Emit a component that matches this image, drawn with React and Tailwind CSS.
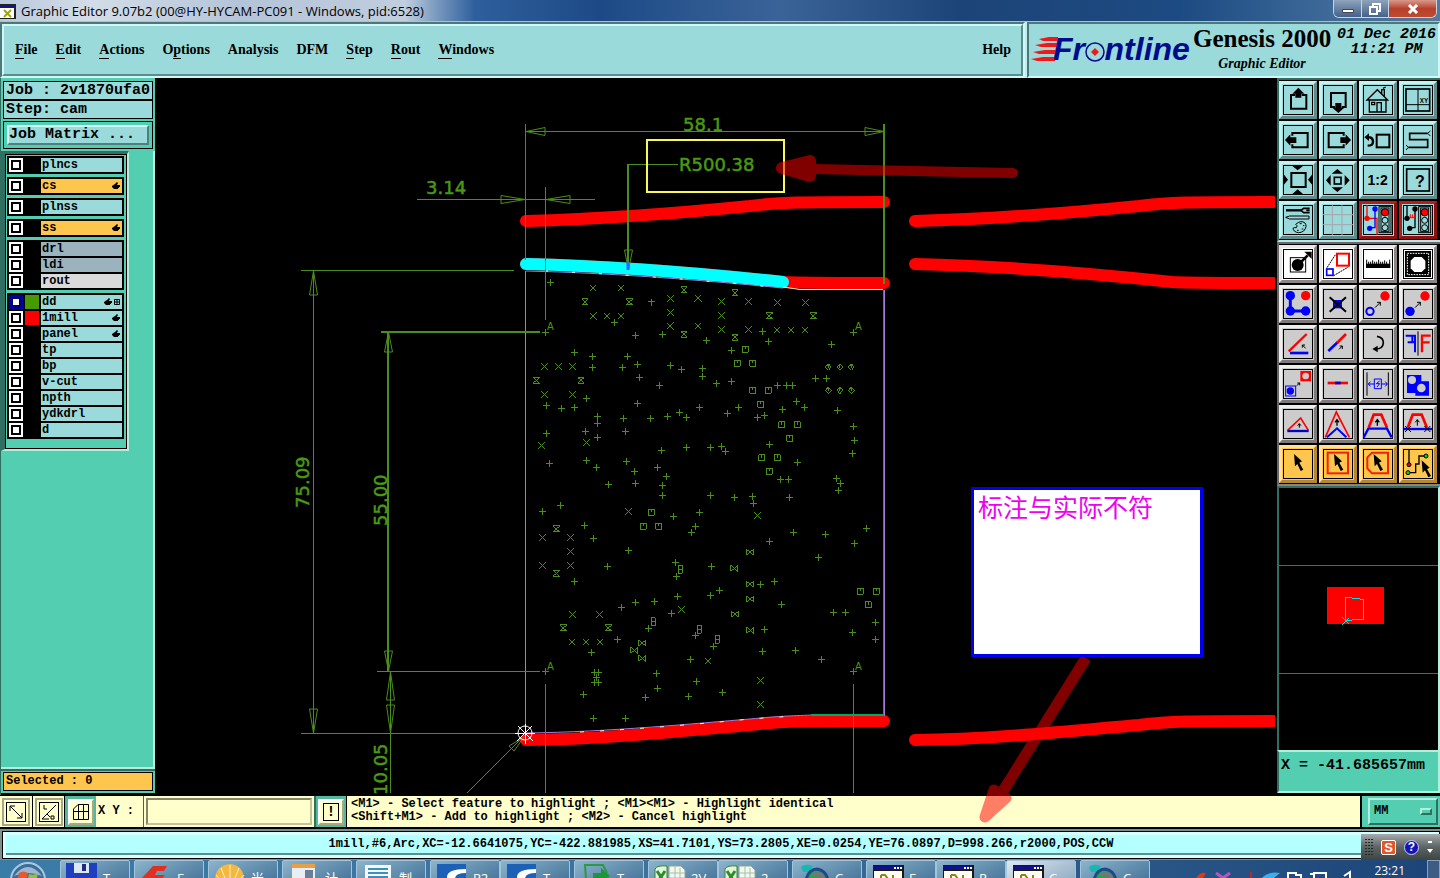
import { useState } from "react";

const MENUS = [
  { name: "File", key: 0 },
  { name: "Edit", key: 0 },
  { name: "Actions", key: 0 },
  { name: "Options", key: 1 },
  { name: "Analysis", key: -1 },
  { name: "DFM", key: -1 },
  { name: "Step", key: 0 },
  { name: "Rout", key: 0 },
  { name: "Windows", key: 0 },
];

const LAYER_GROUPS = [
  [{ name: "plncs", bg: "bg-[#9adada]" }],
  [{ name: "cs", bg: "bg-[#ffc64d]", hand: true }],
  [{ name: "plnss", bg: "bg-[#9adada]" }],
  [{ name: "ss", bg: "bg-[#ffc64d]", hand: true }],
  [
    { name: "drl", bg: "bg-[#9ab3bd]" },
    { name: "ldi", bg: "bg-[#9ab3bd]" },
    { name: "rout", bg: "bg-[#dadada]" },
  ],
  [
    { name: "dd", bg: "bg-[#9adada]", swatch: "bg-[#469a00]", hand: true, grid: true, on: true },
    { name: "1mill", bg: "bg-[#9adada]", swatch: "bg-[#ff0000]", hand: true },
    { name: "panel", bg: "bg-[#9adada]", hand: true },
    { name: "tp", bg: "bg-[#9adada]" },
    { name: "bp", bg: "bg-[#9adada]" },
    { name: "v-cut", bg: "bg-[#9adada]" },
    { name: "npth", bg: "bg-[#9adada]" },
    { name: "ydkdrl", bg: "bg-[#9adada]" },
    { name: "d", bg: "bg-[#9adada]" },
  ],
];

// Hole positions, three units to the screen pixel
const UPPER_HOLES = {
  plus: "151,67 454,126 343,187 406,226 487,223 619,241 694,271 787,214 805,245 994,253 1060,217 136,217 223,278 277,290 277,322 382,289 367,322 412,314 418,352 511,316 544,328 607,325 607,349 478,376 649,370 694,365 832,376 859,376 877,376 946,355 979,355 259,415 139,436 183,445 223,442 412,430 292,469 292,490 370,475 451,475 502,469 538,457 559,472 598,442 682,460 715,442 772,472 793,466 847,448 889,424 913,442 1012,452 1060,499 1063,541 1057,580 139,520 256,514 292,532 376,514 259,601 148,610 289,622 379,604 403,634 406,670 325,673 484,571 559,562 631,562 664,559 676,574 808,553 472,622 499,649 487,676 487,706 892,607 841,658 865,658 1009,655 1021,670 1015,691 631,706 703,712 757,709 760,730 868,712 181,736",
  cross: "280,84 364,84 280,168 322,168 364,168 511,115 594,115 511,157 511,198 594,198 664,124 746,124 664,166 664,208 746,208 832,127 916,127 832,210 874,210 916,210 133,320 175,320 217,320 133,403 217,403 259,547 124,556",
  glass: "255,126 388,126 552,90 552,223 705,99 705,232 808,168 940,168 109,361 243,361",
  square: "736,268 712,310 759,310 759,391 805,391 783,433 846,495 892,495 870,535 785,594 832,594 808,634",
  diamond: "985,321 1020,321 1054,321 985,391 1020,391 1054,391",
};

const LOWER_HOLES = {
  plus: "127,34 253,76 280,115 385,151 322,199 223,244 520,49 598,38 586,79 574,97 526,187 529,229 634,200 658,271 631,286 532,289 463,304 406,307 364,322 514,341 445,385 352,418 274,457 586,406 640,439 571,478 469,520 589,544 472,565 436,592 565,589 667,577 250,583 280,655 376,655 808,125 880,97 976,103 1099,85 1063,130 955,172 781,253 823,244 844,313 793,388 787,454 886,451 964,478 1000,337 1036,337 1126,367 1126,418 1057,397 1060,515 136,515 283,517 295,517 289,532 283,547 295,547",
  cross: "385,35 127,112 211,112 211,154 127,196 211,196 217,343 299,343 217,426 259,426 299,426 544,328 625,483 772,47 781,541 781,614",
  glass: "169,87 169,220 190,384 325,384",
  square: "454,37 430,79 477,79 1081,274 1129,274 1105,315",
  bowtie: "750,157 703,205 750,253 751,297 705,343 751,391 427,429 403,451 427,475",
  double: "541,208 460,366 598,388 652,418",
};

const HOLE_SHAPES = {
  plus: "m-10 0h21m-10 -10v21",
  cross: "m-10 -10l20 20m0 -20l-20 20",
  glass: "m-10 -9h20l-20 18h20l-20 -18",
  square: "m-9 -9h18v18h-18zm9 0v9",
  diamond: "m0 -10l9 10l-9 10l-9 -10zm0 0v12m-5 -5l5 -5l5 5",
  bowtie: "m-10 -9v18l20 -18v18l-20 -18",
  double: "m-6 -12h12v24h-12zm0 12h12",
};

function Holes({ data }) {
  return Object.keys(data).map((kind) => (
    <path
      key={kind}
      d={data[kind].split(" ").map((p) => "M" + p + HOLE_SHAPES[kind]).join("")}
    />
  ));
}

function Cursor({ x = 33, y = 15 }) {
  return (
    <path
      transform={`translate(${x} ${y})`}
      d="M0 0L24 22L16 26L28 47L20 51L10 30L3 37Z"
      fill="#000"
      stroke="none"
    />
  );
}

function Light({ x }) {
  return (
    <g strokeWidth="3">
      <rect x={x} y="5" width="36" height="78" />
      <rect x={x + 6} y="9" width="24" height="70" />
      <circle cx={x + 18} cy="22" r="11" fill="#f00" />
      <circle cx={x + 18} cy="46" r="9" />
      <circle cx={x + 18} cy="68" r="9" />
    </g>
  );
}

const VIEW_TOOLS = [
  { name: "Pan up", art: <><path d="M36 30H24V71H70V30H56" strokeWidth="6" /><path d="M46 8L64 26H55V38H37V26H28Z" fill="#000" stroke="none" /></> },
  { name: "Pan down", art: <><path d="M36 66H24V24H68V66H56" strokeWidth="6" /><path d="M46 84L64 68H55V54H37V68H28Z" fill="#000" stroke="none" /></> },
  { name: "Home", art: <><path d="M19 44V81H69V44M12 45L43 14L74 45ZM26 52H35V59H26ZM42 81V53H55V81M56 26V14H64V34M60 10L68 6" strokeWidth="4" /></> },
  { name: "Coordinates", art: <><rect x="9" y="12" width="71" height="66" strokeWidth="5" /><path d="M45 12V78M9 59H80" /><text x="50" y="54" fontSize="19" fontWeight="bold" fill="#000" stroke="none">XY</text></> },
  { name: "Pan left", art: <><path d="M28 32V24H74V67H28V58" strokeWidth="6" /><path d="M6 45L22 28V37H40V54H22V62Z" fill="#000" stroke="none" /></> },
  { name: "Pan right", art: <><path d="M62 32V24H17V67H62V58" strokeWidth="6" /><path d="M84 45L68 28V37H52V54H68V62Z" fill="#000" stroke="none" /></> },
  { name: "Previous view", art: <><rect x="41" y="29" width="38" height="38" strokeWidth="6" /><path d="M14 37H22Q30 40 30 50Q30 62 14 62" strokeWidth="7" /><path d="M4 37L18 25V48Z" fill="#000" stroke="none" /></> },
  { name: "Snake view", art: <><path d="M74 25H20V44H74V67H16" strokeWidth="5" /><path d="M74 25L82 18M74 25L82 33M16 67L9 60M16 67L9 75" /></> },
  { name: "Zoom out", art: <><rect x="25" y="24" width="43" height="42" strokeWidth="6" /><path d="M28 3H60L44 16ZM28 87H60L44 73ZM2 28V60L15 44ZM88 28V60L75 44Z" fill="#000" stroke="none" /></> },
  { name: "Zoom in", art: <><rect x="34" y="37" width="20" height="20" strokeWidth="5" /><path d="M26 26H60L43 12ZM26 67H60L43 81ZM23 30V62L9 46ZM65 30V62L80 46Z" fill="#000" stroke="none" /></> },
  { name: "One to two", art: <text x="44" y="59" fontSize="42" fontWeight="bold" textAnchor="middle" fill="#000" stroke="none">1:2</text> },
  { name: "Query", art: <><rect x="11" y="12" width="68" height="66" strokeWidth="5" /><text x="51" y="66" fontSize="48" fontWeight="bold" textAnchor="middle" fill="#000" stroke="none">?</text></> },
  { name: "Setup", art: <><path d="M9 16H56" strokeWidth="7" /><path d="M80 10H62L54 16L62 23H80M70 16H80" strokeWidth="5" /><path d="M8 37L20 33H78V42H20Z" /><path d="M38 58Q54 44 66 54Q74 64 62 78Q46 88 34 78Q24 66 40 68Q46 62 38 58ZM50 56h6M60 62h4M56 72h5M42 76h5" /></> },
  { name: "Grid", art: <path d="M28 0V90M57 0V90M0 29H90M0 59H90" stroke="#a9a4ac" /> },
  { name: "Net check", red: true, art: <><path d="M12 0V40M12 40H42V90" stroke="#f00" strokeWidth="4" /><path d="M36 12V68H20" stroke="#00f" strokeWidth="4" /><circle cx="36" cy="12" r="8" fill="#00f" stroke="none" /><circle cx="20" cy="70" r="8" fill="#00f" stroke="none" /><circle cx="12" cy="40" r="8" fill="#f00" stroke="none" /><Light x={48} /></> },
  { name: "Online check", red: true, art: <><path d="M12 0V40M36 12V68H20" strokeWidth="4" /><path d="M20 38H34M22 28V38M28 28V38M34 28V38" stroke="#f00" /><circle cx="36" cy="12" r="8" fill="#000" stroke="none" /><circle cx="20" cy="70" r="8" fill="#000" stroke="none" /><circle cx="12" cy="40" r="8" fill="#000" stroke="none" /><Light x={47} /></> },
];

const EDIT_TOOLS = [
  { name: "Add feature", white: true, art: <><rect x="22" y="26" width="46" height="43" /><circle cx="44" cy="48" r="18" fill="#000" stroke="none" /><path d="M56 37L74 19" strokeWidth="8" /><path d="M64 8H86V30Z" fill="#000" stroke="none" /></> },
  { name: "Resize feature", white: true, art: <><path d="M12 56L38 16M32 80L76 54" strokeDasharray="6 2" /><rect x="42" y="14" width="36" height="36" stroke="#f00" strokeWidth="6" /><rect x="11" y="60" width="19" height="19" stroke="#00f" strokeWidth="5" /></> },
  { name: "Measure", white: true, art: <><path d="M9 44H82V57H9Z" fill="#000" stroke="none" /><path d="M11 32V46M17 38V46M23 38V46M29 34V46M35 38V46M41 38V46M47 32V46M53 38V46M59 38V46M65 34V46M71 38V46M80 32V46" /></> },
  { name: "Negative", white: true, art: <><path d="M6 6H84V84H6Z" fill="#000" stroke="none" /><path d="M13 13H77V77H13Z" stroke="#fff" strokeDasharray="5 3" /><path d="M34 24H56L67 35V58L56 69H34L23 58V35Z" fill="#fff" stroke="none" /></> },
  { name: "Connect", art: <><path d="M22 20V66H68" stroke="#00f" strokeWidth="9" /><g stroke="none" fill="#00f"><circle cx="22" cy="20" r="14" /><circle cx="22" cy="66" r="14" /><circle cx="68" cy="66" r="14" /><circle cx="68" cy="20" r="14" fill="#f00" /></g></> },
  { name: "Delete", art: <><path d="M30 33H57V58H30Z" fill="#00f" stroke="none" /><path d="M20 25L69 68M69 25L20 68" strokeWidth="6" /></> },
  { name: "Copy", art: <><circle cx="21" cy="67" r="11" stroke="#00f" strokeWidth="6" /><circle cx="66" cy="21" r="14" fill="#f00" stroke="none" /><path d="M36 56L52 40M42 40H52V50" /></> },
  { name: "Move", art: <><circle cx="21" cy="67" r="14" fill="#00f" stroke="none" /><circle cx="66" cy="21" r="14" fill="#f00" stroke="none" /><path d="M36 56L52 40M42 40H52V50" /></> },
  { name: "Rotate", art: <><path d="M17 67L71 15" stroke="#f00" strokeWidth="7" /><path d="M21 72H76" stroke="#00f" strokeWidth="8" /><path d="M68 58L58 48M58 56V48H66" /></> },
  { name: "Stretch", art: <><path d="M16 66L44 40" stroke="#00f" strokeWidth="8" /><path d="M42 42L69 15" stroke="#f00" strokeWidth="8" /><path d="M48 61L58 51M50 51H58V60" /></> },
  { name: "Turn", art: <><path d="M42 22Q62 26 61 42Q60 60 38 60" strokeWidth="5" /><path d="M28 60L44 50V70Z" fill="#000" stroke="none" /></> },
  { name: "Mirror", art: <><path d="M8 20H36V70M14 40H36M28 20V40" stroke="#00f" strokeWidth="6" /><path d="M57 70V20H83M57 40H80" stroke="#f00" strokeWidth="7" /><path d="M45 7V80" /></> },
  { name: "Scale copy", art: <><rect x="8" y="51" width="30" height="30" stroke="#00f" /><circle cx="22" cy="66" r="11" fill="#00f" stroke="none" /><path d="M52 6H84V37H52Z" fill="#f00" stroke="none" /><circle cx="68" cy="21" r="10" fill="#ccc" stroke="none" /><path d="M41 50L50 42M43 42H50V49" /></> },
  { name: "Join", art: <><path d="M14 42H75" stroke="#f00" strokeWidth="8" /><path d="M36 42H53" stroke="#00c" strokeWidth="8" /></> },
  { name: "Spacing", art: <><path d="M12 10V80M76 10V80" /><path d="M34 30H55V59H34ZM50 36L40 44H50L42 54M16 45H34M22 38L16 45L22 52M55 45H73M67 38L73 45L67 52" stroke="#00f" /></> },
  { name: "Merge", art: <><path d="M12 18H55V72H12ZM37 37H78V80H37Z" fill="#00f" stroke="none" /><circle cx="27" cy="33" r="12" fill="#ccc" stroke="none" /><circle cx="55" cy="57" r="13" fill="#ccc" stroke="none" /></> },
  { name: "Triangle", art: <><path d="M14 64L53 27L76 64" stroke="#f00" strokeWidth="5" /><path d="M13 66H77" stroke="#00c" strokeWidth="7" /><path d="M49 56V44M44 50L49 44L54 50" /></> },
  { name: "Peak", art: <><path d="M7 85L40 9L79 85" stroke="#f00" strokeWidth="5" /><path d="M12 85L42 58L70 85" stroke="#00f" strokeWidth="6" /><path d="M42 50V32M36 40L42 32L48 40" strokeWidth="4" /></> },
  { name: "Trapezoid", art: <><path d="M17 56L32 17H55L72 56" stroke="#f00" strokeWidth="8" /><path d="M2 85L16 59H72L86 85" stroke="#00f" strokeWidth="7" /><path d="M43 50V32M37 40L43 32L49 40" strokeWidth="4" /></> },
  { name: "Trim", art: <><path d="M14 56L29 17H56L72 56" stroke="#f00" strokeWidth="8" /><path d="M3 60H87" stroke="#00f" strokeWidth="7" /><path d="M43 50V32M37 40L43 32L49 40M6 51L24 69M24 51L6 69M64 51L82 69M82 51L64 69" /></> },
  { name: "Select", amber: true, art: <Cursor /> },
  { name: "Select in frame", amber: true, art: <><rect x="14" y="11" width="61" height="62" stroke="#f62000" strokeWidth="6" /><Cursor /></> },
  { name: "Select in polygon", amber: true, art: <><path d="M27 11H75V73H27L13 58V25Z" stroke="#f62000" strokeWidth="6" /><Cursor x={32} /></> },
  { name: "Select net", amber: true, art: <><path d="M18 2V47M15 71H38V45H48V21H69" strokeWidth="4" /><circle cx="18" cy="47" r="6" fill="#e00" /><circle cx="69" cy="21" r="6" fill="#0d0" /><circle cx="15" cy="71" r="6" fill="#0d0" /><Cursor x={56} y={34} /></> },
];

function toolClass(tool) {
  const base = "size-[38px] border-3 flex items-center justify-center";
  if (tool.red) return base + " bg-[#9adada] border-[#b81c1c] border-b-[#8c1010] border-r-[#8c1010]";
  if (tool.white) return base + " bg-white border-t-[#e8e8e8] border-l-[#e8e8e8] border-b-[#8a8484] border-r-[#8a8484]";
  if (tool.amber) return base + " bg-[#ffc64d] border-t-[#ffe09a] border-l-[#ffe09a] border-b-[#b8862c] border-r-[#b8862c]";
  if (tool.teal) return base + " bg-[#9adada] border-t-[#c8f0f0] border-l-[#c8f0f0] border-b-[#5d8c8c] border-r-[#5d8c8c]";
  return base + " bg-[#cccccc] border-t-[#eeeeee] border-l-[#eeeeee] border-b-[#7f7a7a] border-r-[#7f7a7a]";
}

function ToolButton({ tool }) {
  return (
    <button className={toolClass(tool)} aria-label={tool.name}>
      <svg
        viewBox="0 0 90 90"
        className="size-[30px] shrink-0"
        fill="none"
        stroke="#000"
        strokeWidth="3"
        fontFamily="Liberation Sans, sans-serif"
      >
        <rect x="1.5" y="1.5" width="87" height="87" shapeRendering="crispEdges" />
        {tool.art}
      </svg>
    </button>
  );
}

function TitleBar() {
  return (
    <div className="h-[22px] shrink-0 flex items-start justify-between border-b border-[#a8c0d8] bg-[linear-gradient(90deg,#b9c8dc_0px,#d3dde9_90px,#b4c4d8_240px,#c0cede_405px,#7d9cc0_435px,#2e5f9c_475px,#1d4a86_600px,#3a6398_780px,#1d4478_960px,#1c4a82_1180px,#3c6898_1320px,#56789c_1440px)]">
      <div className="flex items-center gap-[5px] h-[22px]">
        <svg viewBox="0 0 16 15" className="w-4 h-[15px]">
          <path d="M0 0H16V15H0Z" fill="#222" />
          <path d="M0 1H15V4H0Z" fill="#14148c" />
          <path d="M0 4H14V14H0Z" fill="#fff" />
          <path d="M4 6L11 13M11 6L4 13" stroke="#a0a800" strokeWidth="2" />
        </svg>
        <span className="text-[13px] leading-4 text-black font-['Open_Sans','Noto_Sans',sans-serif]">
          Graphic Editor 9.07b2 (00@HY-HYCAM-PC091 - Windows, pid:6528)
        </span>
      </div>
      <div className="flex h-[18px] mr-[3px] border border-t-0 border-[#c8d4e0] rounded-b-md overflow-hidden">
        <button aria-label="Minimize" className="w-[28px] flex items-center justify-center pt-1 bg-gradient-to-b from-[#8fa4bc] to-[#456288] border-r border-[#c8d4e0]">
          <svg viewBox="0 0 12 4" className="w-3 h-1"><path d="M0.500 0.500H11.500V3.500H0.500Z" fill="#fff" stroke="#445" /></svg>
        </button>
        <button aria-label="Restore" className="w-[27px] flex items-center justify-center bg-gradient-to-b from-[#8fa4bc] to-[#456288] border-r border-[#c8d4e0]">
          <svg viewBox="0 0 12 12" className="size-3" fill="none" stroke="#fff" strokeWidth="2"><path d="M4 3V1H11V8H9" /><rect x="1" y="4" width="7" height="7" /></svg>
        </button>
        <button aria-label="Close" className="w-[47px] flex items-center justify-center bg-gradient-to-b from-[#d8998c] via-[#b8402c] to-[#c04a30]">
          <svg viewBox="0 0 12 10" className="w-3 h-2.5" stroke="#fff" strokeWidth="3"><path d="M2 1L10 9M10 1L2 9" /></svg>
        </button>
      </div>
    </div>
  );
}

function MenuLabel({ name, mark }) {
  if (mark < 0) return name;
  return (
    <>
      {name.slice(0, mark)}
      <span className="border-b border-black pb-px">{name[mark]}</span>
      {name.slice(mark + 1)}
    </>
  );
}

function Header() {
  return (
    <header className="h-14 shrink-0 flex gap-[2px] bg-[#bfeeee] font-['Liberation_Serif',serif] text-black">
      <div className="flex-1 border-2 border-t-[#4d7878] border-l-[#4d7878] border-b-[#d0f8f8] border-r-[#d0f8f8]">
        <nav className="h-full flex items-center gap-[18px] pl-[11px] pr-[10px] bg-[#9adada] border-2 border-t-[#d0f8f8] border-l-[#d0f8f8] border-b-[#5b8d8d] border-r-[#5b8d8d] text-[14px] leading-4 font-bold">
          {MENUS.map((m) => (
            <button key={m.name}>
              <MenuLabel name={m.name} mark={m.key} />
            </button>
          ))}
          <button className="ml-auto">Help</button>
        </nav>
      </div>
      <div className="w-[413px] flex bg-[#9adada] border-2 border-t-[#4d7878] border-l-[#4d7878] border-b-[#d0f8f8] border-r-[#d0f8f8]">
        <svg viewBox="0 0 164 50" className="w-[164px] h-[50px] shrink-0">
          <g fill="#f01818">
            <path d="M10 15L20 13H29V17H14Z" />
            <path d="M6 21L18 19H29V23H12Z" />
            <path d="M4 28L16 26H28V30H10Z" />
            <path d="M2 35L14 33H26V37H8Z" />
          </g>
          <text x="24" y="36" fontSize="32" fontWeight="bold" fontStyle="italic" fill="#000c8c" fontFamily="Liberation Sans, Arial, sans-serif">Frontline</text>
          <circle cx="66" cy="28" r="10" fill="#9adada" />
          <circle cx="66" cy="28" r="9" fill="none" stroke="#000c8c" strokeWidth="1.5" />
          <path d="M66 24L70 28L66 32L62 28Z" fill="#f01818" />
        </svg>
        <div className="w-[138px] shrink-0 pt-px text-center">
          <div className="text-[25px] leading-7 font-bold whitespace-nowrap">Genesis 2000</div>
          <div className="text-[14px] leading-[22px] font-bold italic">Graphic Editor</div>
        </div>
        <div className="flex-1 pt-[3px] pl-1 text-center text-[15px] leading-[15px] italic font-bold whitespace-nowrap font-['Liberation_Mono',monospace]">
          <div>01 Dec 2016</div>
          <div>11:21 PM</div>
        </div>
      </div>
    </header>
  );
}

function HandIcon() {
  return (
    <svg viewBox="0 0 8 8" className="size-2" fill="#000">
      <path d="M0 4L3 2L5 0L6 1L5 3H8V5H7V6H6V7H2L0 5Z" />
    </svg>
  );
}

function LayerRow({ layer }) {
  const [on, setOn] = useState(!!layer.on);
  return (
    <label className="h-[14px] flex gap-[2px]">
      <input
        type="checkbox"
        checked={on}
        onChange={() => setOn(!on)}
        className="appearance-none size-[14px] bg-white shadow-[inset_0_0_0_2px_#fff,inset_0_0_0_4px_#000] checked:shadow-[inset_0_0_0_2px_#0000a8,inset_0_0_0_4px_#000070]"
      />
      <span className={`w-[14px] ${layer.swatch || "bg-black"}`} />
      <span className={`flex-1 flex items-center gap-[2px] pl-px pr-[2px] ${layer.bg}`}>
        <span className="flex-1">{layer.name}</span>
        {layer.hand && <HandIcon />}
        {layer.grid && (
          <svg viewBox="0 0 6 6" className="size-1.5" fill="none" stroke="#000"><path d="M0.500 0.500H5.500V5.500H0.500ZM3 0V6M0 3H6" /></svg>
        )}
      </span>
    </label>
  );
}

function LeftPanel() {
  return (
    <aside className="w-[155px] shrink-0 flex flex-col bg-[#54ceb0] border-l border-[#2f6e60] font-['Liberation_Mono',monospace] font-bold">
      <div className="pt-[3px] pl-[2px] pr-[2px] text-[15px]">
        <div className="h-[19px] pl-[2px] leading-[17px] border border-black bg-[#9adada] whitespace-nowrap">Job : 2v1870ufa0</div>
        <div className="h-[19px] pl-[2px] leading-[17px] border border-black bg-[#9adada]">Step: cam</div>
        <div className="mt-[2px] p-[3px] border border-black">
          <button className="block w-full h-5 text-left leading-4 bg-[#9adada] border-2 border-t-[#d0f8f8] border-l-[#d0f8f8] border-b-[#4d8080] border-r-[#4d8080]">
            Job Matrix ...
          </button>
        </div>
      </div>
      <div className="flex-1 mt-[2px] border-r-2 border-b-2 border-[#b0f0dc] text-[12px] leading-[14px]">
        <div className="w-[128px] border-l-4 border-t-3 border-r-2 border-b-2 border-l-[#2f6e60] border-t-[#2f6e60] border-r-[#b0f0dc] border-b-[#b0f0dc]">
          <div className="flex flex-col gap-[3px] pt-px pl-px pr-[2px] pb-[9px] border border-black">
            {LAYER_GROUPS.map((group) => (
              <div key={group[0].name} className="flex flex-col gap-[2px] p-[2px] bg-black">
                {group.map((layer) => (
                  <LayerRow key={layer.name} layer={layer} />
                ))}
              </div>
            ))}
          </div>
        </div>
      </div>
      <div className="pt-px pb-[2px] px-[2px] border-t-2 border-[#2f6e60]">
        <div className="h-[19px] pl-[2px] text-[12px] leading-[17px] border border-black bg-[#ffc64d]">Selected : 0</div>
      </div>
      <div className="h-[2px] bg-black" />
    </aside>
  );
}

const RED_TOP = "M526 221C600 219 680 213 750 206C780 202 800 202 884 202";
const RED_MID = "M526 264C610 266 690 272 783 282C800 283 820 283 884 283";
const RED_LOW = "M526 740C610 739 690 730 750 725C780 721 800 721 884 721";

function Canvas() {
  return (
    <main className="relative flex-1 min-w-0 bg-black">
      <svg viewBox="155 78 1120 717" preserveAspectRatio="xMinYMin slice" className="absolute inset-0 size-full" fill="none">
        <g stroke="#f00" strokeWidth="12" strokeLinecap="round">
          <path d={RED_TOP} />
          <path d={RED_MID} />
          <path d={RED_LOW} />
          <g transform="translate(389 0)">
            <path d={RED_TOP} />
            <path d={RED_MID} />
            <path d={RED_LOW} />
          </g>
        </g>
        <path d="M526 264C610 266 690 272 783 282" stroke="#0ff" strokeWidth="12" strokeLinecap="round" />

        {/* board outline */}
        <g stroke="#a47ad6">
          <path d="M525.500 271V733" />
          <path d="M884.500 290V716" />
          <path d="M526 271C610 273 690 279 783 288" />
          <path d="M526 733C610 732 700 723 750 719C780 716 790 716 811 715" />
        </g>
        <path d="M545 271C620 274 690 279 783 288" stroke="#fff" strokeDasharray="3 24" />
        <path d="M783 287L800 289.500H883" stroke="#ffe9b0" />
        <path d="M811 715H884" stroke="#00a860" strokeWidth="2" />
        <path d="M580 732C640 729 700 724 750 719L795 716" stroke="#fff0c0" strokeDasharray="4 16" />

        <g stroke="#4a8f1c">
          <path d="M525.500 124V260M545.500 187V320M526 131.500H884M883.500 290V715" />
          <path d="M884 124V284M628 164V268" strokeWidth="2" />
          <path d="M526 131.500L545 127.500V135.500ZM884 131.500L865 127.500V135.500Z" />
          <path d="M678 164.500H628" />
          <path d="M628.500 270L624.500 250H632.500Z" />
          <path d="M417 199.500H595M525 199.500L501 195.500V203.500ZM546 199.500L570 195.500V203.500Z" />
          <path d="M301 270.500H514M301 733.500H520M313.500 270V733M313.500 271L309.500 295H317.500ZM313.500 733L309.500 709H317.500Z" />
          <path d="M381 332H540M388 332V671" strokeWidth="2" />
          <path d="M388.500 332L384.500 352H392.500ZM388.500 671L384.500 651H392.500Z" />
          <path d="M377 671.500H540M390.500 671V793M390.500 672L386.500 700H394.500ZM390.500 733L386.500 705H394.500Z" />
          <path d="M545.500 684V793M853.500 684V793M467 793L525 735M524 737L509 746L514 751Z" />
        </g>
        <path d="M628 262V270" stroke="#2868ff" strokeWidth="3" />
        <g fill="#4a9a10" stroke="#4a9a10" strokeWidth="0.5" fontSize="18" fontFamily="DejaVu Sans, Verdana, sans-serif">
          <text x="683" y="131">58.1</text>
          <text x="679" y="171">R500.38</text>
          <text x="426" y="194">3.14</text>
          <text transform="translate(309 508) rotate(-90)">75.09</text>
          <text transform="translate(387 526) rotate(-90)">55.00</text>
          <text transform="translate(387 795) rotate(-90)">10.05</text>
          <g fontSize="10" stroke="none">
            <text x="547" y="330">A</text>
            <text x="855" y="330">A</text>
            <text x="547" y="670">A</text>
            <text x="855" y="670">A</text>
          </g>
        </g>
        <rect x="647" y="140" width="137" height="52" stroke="#f8f850" strokeWidth="2" />

        <g stroke="#4a8f1c" strokeWidth="3" shapeRendering="crispEdges">
          <g transform="translate(500 260) scale(0.3333)">
            <Holes data={UPPER_HOLES} />
          </g>
          <g transform="translate(500 500) scale(0.3333)">
            <Holes data={LOWER_HOLES} />
          </g>
        </g>

        {/* datum mark */}
        <g stroke="#fff">
          <circle cx="525" cy="733" r="7" />
          <path d="M515 733.500H535M525.500 724V744M518 726L533 741M532 726L517 741" />
        </g>
      </svg>

      <div className="absolute left-[816px] top-[409px] w-[232px] h-[170px] z-10 border-3 border-[#0000f0] bg-white pl-1 text-[25px] leading-8 text-[#f000f0] font-['Noto_Sans_CJK_SC',sans-serif] whitespace-nowrap">
        标注与实际不符
      </div>

      {/* mark-up arrows, the lower one runs down over the prompt line */}
      <svg viewBox="155 78 1120 717" preserveAspectRatio="xMinYMin slice" className="absolute inset-0 size-full overflow-visible pointer-events-none" fill="#f00" stroke="#f00" strokeLinejoin="round">
        <g opacity="0.5">
          <path d="M782 168L810 161V176Z" strokeWidth="12" />
          <path d="M812 169L1013 173" strokeWidth="10" strokeLinecap="round" />
        </g>
        <g opacity="0.5">
          <path d="M985 817L994 790L1006 798Z" strokeWidth="11" />
          <path d="M1086 658L1003 791" strokeWidth="11" />
        </g>
      </svg>
    </main>
  );
}

function RightPanel() {
  return (
    <aside className="w-[165px] shrink-0 flex flex-col bg-black pl-[2px]">
      <div className="grid grid-cols-[repeat(4,38px)] gap-[2px] pt-px pb-px border-t-2 border-l-2 border-b-2 border-t-[#2f6e60] border-l-[#2f6e60] border-b-[#b4e8e8]">
        {VIEW_TOOLS.map((tool) => (
          <ToolButton key={tool.name} tool={{ ...tool, teal: true }} />
        ))}
      </div>
      <div className="grid grid-cols-[repeat(4,38px)] gap-[2px] pt-px pb-px border-t-2 border-l-2 border-b-2 border-t-[#6c6868] border-l-[#6c6868] border-b-[#8a8484]">
        {EDIT_TOOLS.map((tool) => (
          <ToolButton key={tool.name} tool={tool} />
        ))}
      </div>
      <div className="flex-1 min-h-0 border-t-2 border-l-2 border-r-2 border-t-[#2f6e60] border-l-[#2f6e60] border-r-[#b0f0dc]">
        <svg viewBox="1279 488 159 261" preserveAspectRatio="xMinYMin slice" className="size-full" fill="none" shapeRendering="crispEdges">
          <path d="M1279 565.500H1438M1279 672.500H1438" stroke="#3f8014" />
          <path d="M1327 587H1384V623H1327Z" fill="#f00" />
          <path d="M1345.500 620V597.500H1351L1363.500 599V618.500L1352 619.500L1345 620.500M1342 617L1349 624M1349 617L1342 624" stroke="#00e8e8" />
        </svg>
      </div>
      <div className="h-[43px] pl-[2px] pt-[5px] bg-[#54ceb0] border-2 border-t-[#b0f0dc] border-l-[#2f6e60] border-b-[#b0f0dc] border-r-[#b0f0dc] text-[15px] leading-[18px] font-bold whitespace-nowrap font-['Liberation_Mono',monospace]">
        X = -41.685657mm
      </div>
      <div className="h-[2px]" />
    </aside>
  );
}

function PromptRow() {
  return (
    <div className="h-[34px] shrink-0 flex bg-[#ffffcc] border-t border-b-2 border-black text-black text-[12px] leading-[13px] font-bold font-['Liberation_Mono',monospace]">
      <button aria-label="Snap to point" className="w-[33px] flex items-center justify-center border-r border-black">
        <svg viewBox="0 0 28 28" className="size-7" fill="none" stroke="#000"><rect x="1" y="1" width="26" height="26" stroke="#a8a888" strokeWidth="2" /><rect x="4.500" y="4.500" width="19" height="19" /><path d="M8 8L20 20M8 13V8H13M20 15V20H15" /></svg>
      </button>
      <button aria-label="Angle snap" className="w-[32px] flex items-center justify-center border-r border-black">
        <svg viewBox="0 0 28 28" className="size-7" fill="none" stroke="#000"><rect x="1" y="1" width="26" height="26" stroke="#a8a888" strokeWidth="2" /><rect x="4.500" y="4.500" width="19" height="19" /><path d="M7 21L21 7M9 7V11H12M7 21H14M16 18H19V21H16ZM12 16L15 19" /></svg>
      </button>
      <button aria-label="Grid snap" className="w-[31px] flex items-center justify-center bg-[#54b89c]">
        <span className="size-[26px] flex items-center justify-center bg-[#ffffcc] border-2 border-t-white border-l-white border-b-[#a8a888] border-r-[#a8a888]">
          <svg viewBox="0 0 18 18" className="size-[18px]" fill="none" stroke="#000"><path d="M1.500 6L6 1.500H16.500V16.500H1.500ZM6.500 2V16M11.500 2V16M2 8.500H16" /></svg>
        </span>
      </button>
      <label htmlFor="xy" className="w-[47px] pl-[2px] leading-[31px]">X Y :</label>
      <div className="w-[173px] p-[2px] border-l border-r-2 border-[#2f6e60]">
        <input id="xy" className="w-full h-[27px] px-1 bg-[#ffffcc] border-2 border-t-[#84846a] border-l-[#84846a] border-b-[#c4c49c] border-r-[#c4c49c] outline-none" />
      </div>
      <button aria-label="Alerts" className="w-[31px] flex items-center justify-center bg-[#54b89c] border-r border-black">
        <span className="size-[26px] flex items-center justify-center bg-[#ffffcc] border-2 border-t-white border-l-white border-b-[#a8a888] border-r-[#a8a888]">
          <span className="w-4 h-[18px] leading-4 text-[14px] border border-black">!</span>
        </span>
      </button>
      <div className="flex-1 pt-[2px] pl-[4px] whitespace-nowrap">
        <p>&lt;M1&gt; - Select feature to highlight ; &lt;M1&gt;&lt;M1&gt; - Highlight identical</p>
        <p>&lt;Shift+M1&gt; - Add to highlight ; &lt;M2&gt; - Cancel highlight</p>
      </div>
      <div className="w-[80px] pl-[6px] pr-[2px] py-[2px] bg-[#54ceb0] border-l-2 border-black">
        <div className="h-full flex items-center pl-1 pr-1 border-2 border-t-[#b0f0dc] border-l-[#b0f0dc] border-b-[#2f6e60] border-r-[#2f6e60]">
          <select aria-label="Units" className="flex-1 min-w-0 appearance-none bg-transparent outline-none">
            <option>MM</option>
            <option>INCH</option>
          </select>
          <span className="w-3 h-[7px] border-2 border-t-[#b0f0dc] border-l-[#b0f0dc] border-b-[#2f6e60] border-r-[#2f6e60]" />
        </div>
      </div>
    </div>
  );
}

function StatusRow() {
  return (
    <div className="relative h-[31px] shrink-0 pl-[2px] pb-px pt-[2px] bg-[#7d9090]">
      <div className="h-full border border-black bg-[#d8ffff] px-[3px] pt-[3px] pb-[3px]">
        <div className="h-full border-b-2 border-[#5c9090] bg-[#b4ffff] text-center text-[12px] leading-[18px] font-bold text-black whitespace-nowrap font-['Liberation_Mono',monospace]">
          1mill,#6,Arc,XC=-12.6641075,YC=-422.881985,XS=41.7101,YS=73.2805,XE=0.0254,YE=76.0897,D=998.266,r2000,POS,CCW
        </div>
      </div>
      {/* input method bar floats over the status line */}
      <div className="absolute right-0 bottom-0 w-[79px] h-[26px] flex items-center gap-[8px] pl-1 bg-gradient-to-b from-[#a8acac] via-[#5c6464] to-[#3c4444]">
        <svg viewBox="0 0 8 16" className="w-2 h-4" stroke="#202828" strokeWidth="2" strokeDasharray="1 2"><path d="M1 0V16M4 0V16M7 0V16" /></svg>
        <span className="size-[15px] rounded-xs bg-[#e4562a] border border-white text-white text-[13px] leading-[13px] font-bold text-center font-['Liberation_Sans',sans-serif]">S</span>
        <span className="size-[15px] rounded-full bg-[#1414b4] border border-[#c8d0f0] text-white text-[12px] leading-[13px] font-bold text-center font-['Liberation_Sans',sans-serif]">?</span>
        <svg viewBox="0 0 6 14" className="w-1.5 h-3.5" fill="#fff"><path d="M1 1H5V3H1ZM0 9H6L3 13Z" /></svg>
      </div>
    </div>
  );
}

const ICONS = {
  floppy: <><path d="M1 2H32V32H4L1 28Z" fill="#1d3fc0" /><path d="M9 2H24V12H9Z" fill="#dfe6f4" /><path d="M17 3H21V10H17Z" fill="#1d2c80" /></>,
  swoosh: <path d="M2 18L14 5H28L25 10H18L16 14H26L22 19H10L4 32Z" fill="#e03020" />,
  shell: <><path d="M2 20Q2 4 17 3Q31 4 31 20L24 32H10Z" fill="#f4b840" /><path d="M17 30V4M17 30L8 7M17 30L26 7M17 30L3 14M17 30L31 14" stroke="#fff0c0" /></>,
  calendar: <><path d="M5 3H28V32H5Z" fill="#e8eef4" /><path d="M5 3H28V7H5Z" fill="#e8a048" /><path d="M18 9H26V18H18Z" fill="#6a8098" /></>,
  notepad: <><path d="M4 4H30V32H4Z" fill="#f4f8fc" /><path d="M7 8H27M7 12H27M7 16H27" stroke="#3c90b8" strokeWidth="2" /></>,
  fox: <><path d="M2 3H31V32H2Z" fill="#1c60b8" /><path d="M12 32V16Q12 8 31 8V12Q20 12 20 18H28V22H18V32Z" fill="#fff" /></>,
  green: <><path d="M8 32L6 4H24L28 12" fill="none" stroke="#2c9848" strokeWidth="2" /><path d="M14 12H22V7L31 15L22 22V18H14Z" fill="#189838" /></>,
  excel: <><path d="M16 5H28L32 9V32H16Z" fill="#f0f8f0" stroke="#90a890" /><path d="M22 5V32M27 7V32M16 12H32M16 17H32" stroke="#a8c0a8" /><path d="M2 8Q4 4 14 5V24H2Z" fill="#e4f4dc" stroke="#308830" /><path d="M4 10L12 22M12 10L4 22" stroke="#289028" strokeWidth="3" /></>,
  turtle: <><path d="M4 6Q8 2 16 5L12 11H6Z" fill="#18b8b0" /><path d="M8 24Q10 8 20 8Q30 10 31 20V26H8Z" fill="#30a048" stroke="#204890" strokeWidth="3" /><path d="M16 14Q22 10 27 17" stroke="#b050b0" strokeWidth="2" fill="none" /></>,
  window: <><path d="M2 4H33V32H2Z" fill="#181818" /><path d="M2 5H31V9H2Z" fill="#10108c" /><path d="M23 6H25V8H23ZM26 6H28V8H26ZM29 6H31V8H29Z" fill="#fff" /><path d="M3 10H31V32H3Z" fill="#fcfcf0" /><path d="M10 14H14L17 18M10 14V24M22 14V24" stroke="#88880c" strokeWidth="2" fill="none" /></>,
};

const TASKS = [
  { icon: "floppy", label: "T..." },
  { icon: "swoosh", label: "F..." },
  { icon: "shell", label: "米..." },
  { icon: "calendar", label: "计..." },
  { icon: "notepad", label: "制..." },
  { icon: "fox", label: "P2..." },
  { icon: "fox", label: "T...", joined: true },
  { icon: "green", label: "T..." },
  { icon: "excel", label: "2V..." },
  { icon: "excel", label: "2...", joined: true },
  { icon: "turtle", label: "C..." },
  { icon: "window", label: "F..." },
  { icon: "window", label: "P...", joined: true },
  { icon: "window", label: "C...", joined: true, active: true },
  { icon: "turtle", label: "C..." },
];

function Taskbar() {
  return (
    <footer className="h-[18px] shrink-0 flex items-start overflow-hidden bg-gradient-to-r from-[#3a7ca8] via-[#3c719c] to-[#1c4478] text-white font-['Open_Sans','Noto_Sans_CJK_SC',sans-serif]">
      <button aria-label="Start" className="w-[56px] h-10 flex justify-center">
        <svg viewBox="0 0 36 36" className="size-9 mt-[2px]">
          <circle cx="18" cy="18" r="17" fill="#3d6c98" stroke="#a8c8e0" strokeWidth="2" />
          <path d="M4 14Q18 -4 32 14Q18 8 4 14Z" fill="#9cb8d0" />
          <path d="M9 11Q13 8 18 11L16 20Q12 17 7 20Z" fill="#e8582c" />
          <path d="M19 12Q24 14 28 11L26 20Q22 23 17 20Z" fill="#90c040" />
        </svg>
      </button>
      {TASKS.map((t, i) => (
        <button
          key={i}
          className={`w-[70px] h-9 shrink-0 flex items-center gap-1 pl-1 overflow-hidden rounded-t-xs border border-[#a4c4dc] ${t.joined ? "" : "ml-1"} ${t.active ? "bg-gradient-to-br from-[#dce8f0] to-[#7c9cb8]" : "bg-gradient-to-br from-[#8cb4cc] to-[#34648c]"}`}
        >
          <svg viewBox="0 0 34 34" className="size-[34px] shrink-0" fill="none">{ICONS[t.icon]}</svg>
          <span className="text-[13px] leading-4 whitespace-nowrap">{t.label}</span>
        </button>
      ))}
      <div className="ml-auto flex items-start">
        <svg viewBox="0 0 170 18" className="w-[170px] h-[18px] mr-3" fill="none">
          <path d="M4 18Q8 12 14 13L11 18Z" fill="#e03818" />
          <path d="M24 13L31 18M38 13L31 18" stroke="#b058c0" strokeWidth="3" />
          <path d="M59 12V18" stroke="#c02828" strokeWidth="2" />
          <path d="M70 18Q76 11 88 13L82 18Z" fill="#38b0f0" />
          <path d="M96 18V13H104V15H109V18M122 18V13H134V18M118 14H122M152 16L158 12V18" stroke="#fff" strokeWidth="2" />
        </svg>
        <time className="pt-[3px] text-[12px] leading-4">23:21</time>
        <button aria-label="Show desktop" className="ml-[22px] w-[13px] h-10 border border-[#88a0b8] bg-[#3c5c84]" />
      </div>
    </footer>
  );
}

export default function App() {
  return (
    <div className="h-screen flex flex-col overflow-hidden bg-black">
      <TitleBar />
      <Header />
      <div className="flex-1 min-h-0 flex">
        <LeftPanel />
        <Canvas />
        <RightPanel />
      </div>
      <PromptRow />
      <StatusRow />
      <Taskbar />
    </div>
  );
}
